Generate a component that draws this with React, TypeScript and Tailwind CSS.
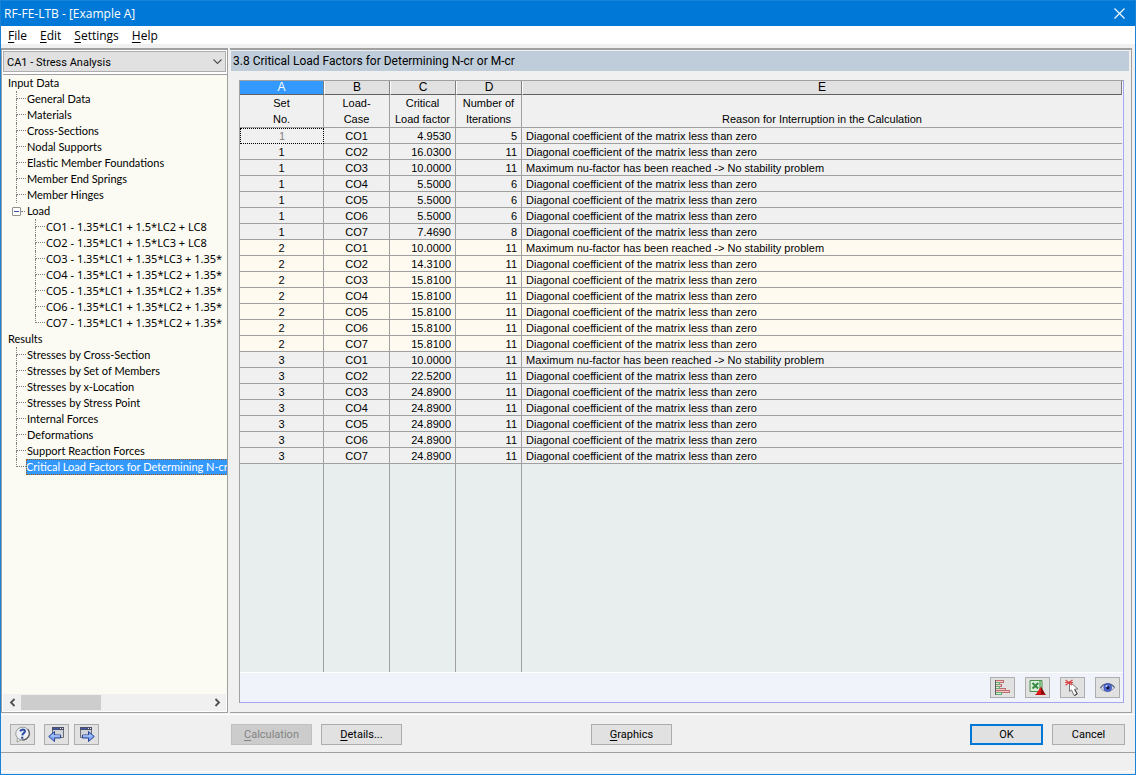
import { useState } from "react";
import type { ReactNode } from "react";
import clsx from "clsx";

type Row = [set: number, lc: string, factor: string, iterations: number];

const DIAGONAL = "Diagonal coefficient of the matrix less than zero";
const MAX_NU = "Maximum nu-factor has been reached -> No stability problem";

const rows: Row[] = [
  [1, "CO1", "4.9530", 5],
  [1, "CO2", "16.0300", 11],
  [1, "CO3", "10.0000", 11],
  [1, "CO4", "5.5000", 6],
  [1, "CO5", "5.5000", 6],
  [1, "CO6", "5.5000", 6],
  [1, "CO7", "7.4690", 8],
  [2, "CO1", "10.0000", 11],
  [2, "CO2", "14.3100", 11],
  [2, "CO3", "15.8100", 11],
  [2, "CO4", "15.8100", 11],
  [2, "CO5", "15.8100", 11],
  [2, "CO6", "15.8100", 11],
  [2, "CO7", "15.8100", 11],
  [3, "CO1", "10.0000", 11],
  [3, "CO2", "22.5200", 11],
  [3, "CO3", "24.8900", 11],
  [3, "CO4", "24.8900", 11],
  [3, "CO5", "24.8900", 11],
  [3, "CO6", "24.8900", 11],
  [3, "CO7", "24.8900", 11],
];

const inputItems = [
  "General Data",
  "Materials",
  "Cross-Sections",
  "Nodal Supports",
  "Elastic Member Foundations",
  "Member End Springs",
  "Member Hinges",
];

const loadItems = [
  "CO1 - 1.35*LC1 + 1.5*LC2 + LC8",
  "CO2 - 1.35*LC1 + 1.5*LC3 + LC8",
  "CO3 - 1.35*LC1 + 1.35*LC3 + 1.35*",
  "CO4 - 1.35*LC1 + 1.35*LC2 + 1.35*",
  "CO5 - 1.35*LC1 + 1.35*LC2 + 1.35*",
  "CO6 - 1.35*LC1 + 1.35*LC2 + 1.35*",
  "CO7 - 1.35*LC1 + 1.35*LC2 + 1.35*",
];

const resultItems = [
  "Stresses by Cross-Section",
  "Stresses by Set of Members",
  "Stresses by x-Location",
  "Stresses by Stress Point",
  "Internal Forces",
  "Deformations",
  "Support Reaction Forces",
  "Critical Load Factors for Determining N-cr",
];

const menus = ["File", "Edit", "Settings", "Help"];

// underlined accelerator on the first letter
function Accel({ text }: { text: string }) {
  return (
    <>
      <span className="underline underline-offset-2">{text[0]}</span>
      {text.slice(1)}
    </>
  );
}

function Branch({ last }: { last?: boolean }) {
  return (
    <span className="flex h-4 w-[10px] shrink-0 flex-col">
      <span className="h-2 border-b border-l border-dotted border-[#808080]" />
      {!last && <span className="h-2 border-l border-dotted border-[#808080]" />}
    </span>
  );
}

function TreeItem({ label, last, selected, onSelect }: { label: string; last?: boolean; selected: boolean; onSelect: (l: string) => void }) {
  return (
    <li className="flex h-4">
      <Branch last={last} />
      <button
        type="button"
        onClick={() => onSelect(label)}
        className={clsx(
          "h-4 text-left leading-4 whitespace-nowrap",
          selected ? "flex-1 bg-[#3399ff] text-white outline -outline-offset-1 outline-dotted outline-[#a05a10]" : "pl-px"
        )}
      >
        {label}
      </button>
    </li>
  );
}

function IconButton({ label, children }: { label: string; children: ReactNode }) {
  return (
    <button type="button" aria-label={label} className="flex h-[21px] w-[25px] items-center justify-center border border-[#adadad] bg-[#e1e1e1]">
      {children}
    </button>
  );
}

function HelpIcon() {
  return (
    <svg width="17" height="17" viewBox="0 0 17 17" fill="none">
      <path d="M3.5 12 L3 16 L7.5 13.8 Z" fill="#fff" stroke="#8a8a8a" strokeWidth=".8" />
      <ellipse cx="8.7" cy="7.6" rx="7" ry="6.4" fill="#eef0f3" stroke="#9a9a9a" />
      <path d="M8 14C13.5 14 17.5 8.5 13.8 3.2" stroke="#5c5c5c" strokeWidth="1.2" />
      <path d="M6.2 5.4C6.8 3.2 11 3 10.9 5.2C10.8 7.2 8.5 7 8.3 9.4" stroke="#2f4fa8" strokeWidth="2.1" />
      <path d="M7.2 10.8h2.1v2h-2.1z" fill="#24408e" />
    </svg>
  );
}

function PageIcon({ next }: { next?: boolean }) {
  return (
    <svg width="17" height="17" viewBox="0 0 17 17">
      <g transform={next ? "translate(-1 0)" : "translate(1 0)"}>
        <path d="M3.5 1.5h11v10h-11z" fill="#d0d3d8" stroke="#6b7078" />
        <path d="M3 1h12v3H3z" fill="#4a4f66" />
        <path d="M4 2h6v1H4z" fill="#4059b5" />
        <path d="M11 2h1v1h-1zM13 2h1v1h-1z" fill="#dfe5f5" />
      </g>
      <path
        d={next ? "M4.5 9h6V5.5l5.8 5-5.8 5V12h-6z" : "M12.5 9h-6V5.5L.7 10.5l5.8 5V12h6z"}
        fill="#7ea6f2"
        stroke="#2a4596"
      />
      <path d={next ? "M5 9.9h9" : "M3 9.9h9"} stroke="#c3d8ff" />
    </svg>
  );
}

function BarsIcon() {
  return (
    <svg width="17" height="17" viewBox="0 0 17 17" shapeRendering="crispEdges">
      <path d="M1.5 1.5h8v2h-8zM1.5 5.5h6v2h-6zM1.5 9.5h10v2h-10zM1.5 11.5h14v2h-14z" fill="#ffc4c4" stroke="#b97070" />
      <path d="M1.5 3.5h4v2h-4zM1.5 7.5h4v2h-4zM1.5 13.5h6v2h-6z" fill="#c9f5cc" stroke="#6fa878" />
      <path d="M1.5 1v15" stroke="#5e5e5e" />
    </svg>
  );
}

function ExcelIcon() {
  return (
    <svg width="17" height="17" viewBox="0 0 17 17">
      <path d="M1 1.5h12v11H1z" fill="#d9efd9" stroke="#4a8f4e" />
      <path d="M10 2h2.5v10H10z" fill="#7fbb82" />
      <path d="M3.5 4l5.5 5.5M9.3 4L3.5 9.5" stroke="#3a8a45" strokeWidth="2" />
      <path d="M12 7.5V16H6.5z" fill="#e01818" />
      <path d="M12 7.5l4.7 8.5H12z" fill="#860a0a" />
      <path d="M6.5 15.5h10" stroke="#c01010" />
    </svg>
  );
}

function PickIcon() {
  return (
    <svg width="17" height="17" viewBox="0 0 17 17">
      <path d="M5.5 2.5v10l2-1.6 2.6 5.6 3.2-1.5-2.5-4.8 3.1-.2z" fill="#fff" stroke="#777" />
      <path d="M10.6 10.5l2.6 4.5-2.8 1.6" fill="none" stroke="#3c3c3c" />
      <path d="M1.5 1l6.5 5M8.5 1L1.5 6.2M1 3.5h8" stroke="#e04545" strokeWidth="1.2" />
    </svg>
  );
}

function EyeIcon() {
  return (
    <svg width="17" height="17" viewBox="0 0 17 17">
      <path d="M1.5 9C4 4 12 3 15.5 8.5C13 13 5 14 1.5 9z" fill="#dde2f2" stroke="#8d93a5" />
      <path d="M1.5 9C4 4 12 3 15.5 8.5" fill="none" stroke="#5a5f78" strokeWidth="1.2" />
      <circle cx="8.7" cy="8.6" r="4" fill="#5068d8" stroke="#33459c" strokeWidth=".6" />
      <circle cx="8.9" cy="8.8" r="1.7" fill="#10163c" />
      <circle cx="7.5" cy="7.2" r=".9" fill="#dbe6ff" />
    </svg>
  );
}

function PushButton({ text, accel, disabled, primary }: { text: string; accel?: boolean; disabled?: boolean; primary?: boolean }) {
  return (
    <button
      type="button"
      disabled={disabled}
      className={clsx(
        "flex h-[21px] items-center justify-center pt-0.5",
        accel ? "w-[81px]" : "w-[73px]",
        disabled ? "border border-[#bfbfbf] bg-[#cccccc] text-[#838383]" : "bg-[#e1e1e1]",
        !disabled && (primary ? "border-2 border-[#0078d7]" : "border border-[#adadad]")
      )}
    >
      <span>{accel ? <Accel text={text} /> : text}</span>
    </button>
  );
}

function Sidebar() {
  const [selected, setSelected] = useState(resultItems[7]);
  const [open, setOpen] = useState(true);

  return (
    <aside className="flex w-[227px] shrink-0 flex-col border-t-2 border-r border-b border-l border-[#a0a0a0] bg-white pt-px pl-px">
      <div className="relative mr-px">
        <select aria-label="Design case" className="block h-[21px] w-full appearance-none border border-[#adadad] bg-[#e1e1e1] px-[3px] pt-0.5 leading-[17px]">
          <option>CA1 - Stress Analysis</option>
        </select>
        <svg className="pointer-events-none absolute top-[7px] right-1" width="9" height="7" viewBox="0 0 9 7" fill="none">
          <path d="M.5 1.5l4 4 4-4" stroke="#505050" strokeWidth="1.1" />
        </svg>
      </div>
      <nav aria-label="Navigator" className="mt-0.5 min-h-0 flex-1 overflow-hidden border-t border-[#a0a0a0] bg-[#fcfbf3] font-['Lato',Tahoma,sans-serif]">
        <ul>
          <li>
            <div className="h-4 px-[5px] leading-4">Input Data</div>
            <ul className="pl-[13px]">
              {inputItems.map((item) => (
                <TreeItem key={item} label={item} selected={selected === item} onSelect={setSelected} />
              ))}
              <li>
                <div className="flex h-4 items-center">
                  <button
                    type="button"
                    aria-label="Toggle Load"
                    aria-expanded={open}
                    onClick={() => setOpen(!open)}
                    className="-ml-1 flex h-[9px] w-[9px] items-center justify-center rounded-[1px] border border-[#919191] bg-white"
                  >
                    <span className="h-px w-[5px] bg-[#3550b0]" />
                  </button>
                  <span className="w-1 border-t border-dotted border-[#808080]" />
                  <span className="pl-0.5 leading-4">Load</span>
                </div>
                {open && (
                  <ul className="pl-[19px] font-['Noto_Sans',Tahoma,sans-serif]">
                    {loadItems.map((item, i) => (
                      <TreeItem key={item} label={item} last={i === loadItems.length - 1} selected={selected === item} onSelect={setSelected} />
                    ))}
                  </ul>
                )}
              </li>
            </ul>
          </li>
          <li>
            <div className="h-4 px-[5px] leading-4">Results</div>
            <ul className="pl-[13px]">
              {resultItems.map((item, i) => (
                <TreeItem key={item} label={item} last={i === resultItems.length - 1} selected={selected === item} onSelect={setSelected} />
              ))}
            </ul>
          </li>
        </ul>
      </nav>
      <div className="mr-px mb-px flex h-[17px] items-center bg-[#f0f0f0]">
        <button type="button" aria-label="Scroll left" className="flex h-full w-[18px] items-center justify-center">
          <svg width="7" height="9" viewBox="0 0 7 9" fill="none">
            <path d="M5.5 1L2 4.5 5.5 8" stroke="#505050" strokeWidth="1.8" />
          </svg>
        </button>
        <div className="h-[15px] flex-1">
          <div className="h-full w-[43%] bg-[#cdcdcd]" />
        </div>
        <button type="button" aria-label="Scroll right" className="flex h-full w-[18px] items-center justify-center">
          <svg width="7" height="9" viewBox="0 0 7 9" fill="none">
            <path d="M1.5 1L5 4.5 1.5 8" stroke="#505050" strokeWidth="1.8" />
          </svg>
        </button>
      </div>
    </aside>
  );
}

const cell = "border-r border-b border-[#a0a0a0] p-0";
const bodyCell = "border-r border-b border-[#a0a0a0] px-1 pt-px pb-0";

function FactorTable() {
  return (
    <table className="h-full w-full table-fixed border-separate border-spacing-0 font-['Liberation_Sans',Arial,sans-serif] leading-[14px]">
      <colgroup>
        <col className="w-[84px]" />
        <col className="w-[66px]" />
        <col className="w-[66px]" />
        <col className="w-[66px]" />
        <col />
      </colgroup>
      <thead>
        <tr className="h-[14px]">
          {["A", "B", "C", "D", "E"].map((c) => (
            <th
              key={c}
              className={clsx(
                "h-[14px] border-r border-b border-r-[#808080] border-b-[#606060] p-0 text-xs leading-[13px] font-normal",
                c === "A" ? "bg-[#3399ff] text-white" : "border-l border-l-white bg-[#e1e1e1]"
              )}
            >
              {c}
            </th>
          ))}
        </tr>
        <tr className="h-[33px] bg-[#f0f0f0] align-bottom leading-4 whitespace-nowrap">
          <th className={clsx(cell, "h-[33px] font-normal")}>Set<br />No.</th>
          <th className={clsx(cell, "font-normal")}>Load-<br />Case</th>
          <th className={clsx(cell, "font-normal")}>Critical<br />Load factor</th>
          <th className={clsx(cell, "font-normal")}>Number of<br />Iterations</th>
          <th className={clsx(cell, "border-r-0 font-normal")}>Reason for Interruption in the Calculation</th>
        </tr>
      </thead>
      <tbody>
        {rows.map(([set, lc, factor, iterations], i) => (
          <tr key={set + lc} className={clsx("h-4", set === 2 ? "bg-[#fffaf0]" : "bg-[#f0f0f0]")}>
            <td
              className={clsx(
                "h-4 text-center",
                i === 0 ? "border border-dotted border-black p-0 text-[#808080]" : bodyCell
              )}
            >
              {set}
            </td>
            <td className={clsx(bodyCell, "text-center")}>{lc}</td>
            <td className={clsx(bodyCell, "text-right")}>{factor}</td>
            <td className={clsx(bodyCell, "text-right")}>{iterations}</td>
            <td className={clsx(bodyCell, "border-r-0 whitespace-nowrap")}>
              {factor === "10.0000" ? MAX_NU : DIAGONAL}
            </td>
          </tr>
        ))}
        <tr className="bg-[#e8eeee]" aria-hidden="true">
          <td className="border-r border-[#a0a0a0]" />
          <td className="border-r border-[#a0a0a0]" />
          <td className="border-r border-[#a0a0a0]" />
          <td className="border-r border-[#a0a0a0]" />
          <td />
        </tr>
      </tbody>
    </table>
  );
}

export default function App() {
  return (
    <div className="flex h-screen flex-col border border-[#1883d7] bg-[#f0f0f0] font-['Roboto',Tahoma,sans-serif] text-[11px] text-black">
      <header>
        <div className="flex h-[25px] items-center justify-between bg-[#0078d7] pr-[10px] pl-[3px] font-['Open_Sans','Segoe_UI',sans-serif] text-xs text-white">
          <h1>RF-FE-LTB - [Example A]</h1>
          <button type="button" aria-label="Close">
            <svg width="11" height="11" viewBox="0 0 11 11" fill="none">
              <path d="M.5 .5l10 10M10.5 .5l-10 10" stroke="#fff" strokeWidth="1.1" />
            </svg>
          </button>
        </div>
        <nav aria-label="Menu" className="flex h-[18px] items-center gap-[13px] bg-white px-[7px] pt-0.5 font-['Open_Sans','Segoe_UI',sans-serif] text-xs">
          {menus.map((m) => (
            <button key={m} type="button">
              <Accel text={m} />
            </button>
          ))}
        </nav>
      </header>

      <main className="mt-1 flex min-h-0 flex-1 gap-0.5">
        <Sidebar />
        <section className="mr-[3px] flex min-w-0 flex-1 flex-col border-t-2 border-r border-b border-[#a0a0a0] pt-px">
          <h2 className="mr-0.5 ml-px h-5 bg-[#bfcddb] px-0.5 text-xs leading-5">3.8 Critical Load Factors for Determining N-cr or M-cr</h2>
          <div className="mt-[9px] mr-[7px] mb-[9px] ml-[9px] flex min-h-0 flex-1 flex-col border border-t-[#a0a0a0] border-r-[#a6a6f0] border-b-[#a6a6f0] border-l-[#a0a0a0] bg-[#f0f4fa]">
            <div className="mr-px min-h-0 flex-1">
              <FactorTable />
            </div>
            <div className="flex h-[30px] items-center justify-end gap-[10px] border-t border-white pr-[3px]">
              <IconButton label="Result diagram"><BarsIcon /></IconButton>
              <IconButton label="Export to Excel"><ExcelIcon /></IconButton>
              <IconButton label="Pick member"><PickIcon /></IconButton>
              <IconButton label="View mode"><EyeIcon /></IconButton>
            </div>
          </div>
        </section>
      </main>

      <div className="mt-px flex h-[38px] items-center border-t border-white px-[9px] pt-0.5">
        <div className="flex w-[221px] shrink-0">
          <IconButton label="Help"><HelpIcon /></IconButton>
          <div className="ml-[9px] flex gap-[5px]">
            <IconButton label="Previous table"><PageIcon /></IconButton>
            <IconButton label="Next table"><PageIcon next /></IconButton>
          </div>
        </div>
        <div className="flex gap-[9px]">
          <PushButton text="Calculation" accel disabled />
          <PushButton text="Details..." accel />
        </div>
        <div className="ml-[189px]">
          <PushButton text="Graphics" accel />
        </div>
        <div className="mr-px ml-auto flex gap-[9px]">
          <PushButton text="OK" primary />
          <PushButton text="Cancel" />
        </div>
      </div>
      <footer className="mb-0.5 h-5 border-t border-b border-t-[#a0a0a0] border-b-white" />
    </div>
  );
}
